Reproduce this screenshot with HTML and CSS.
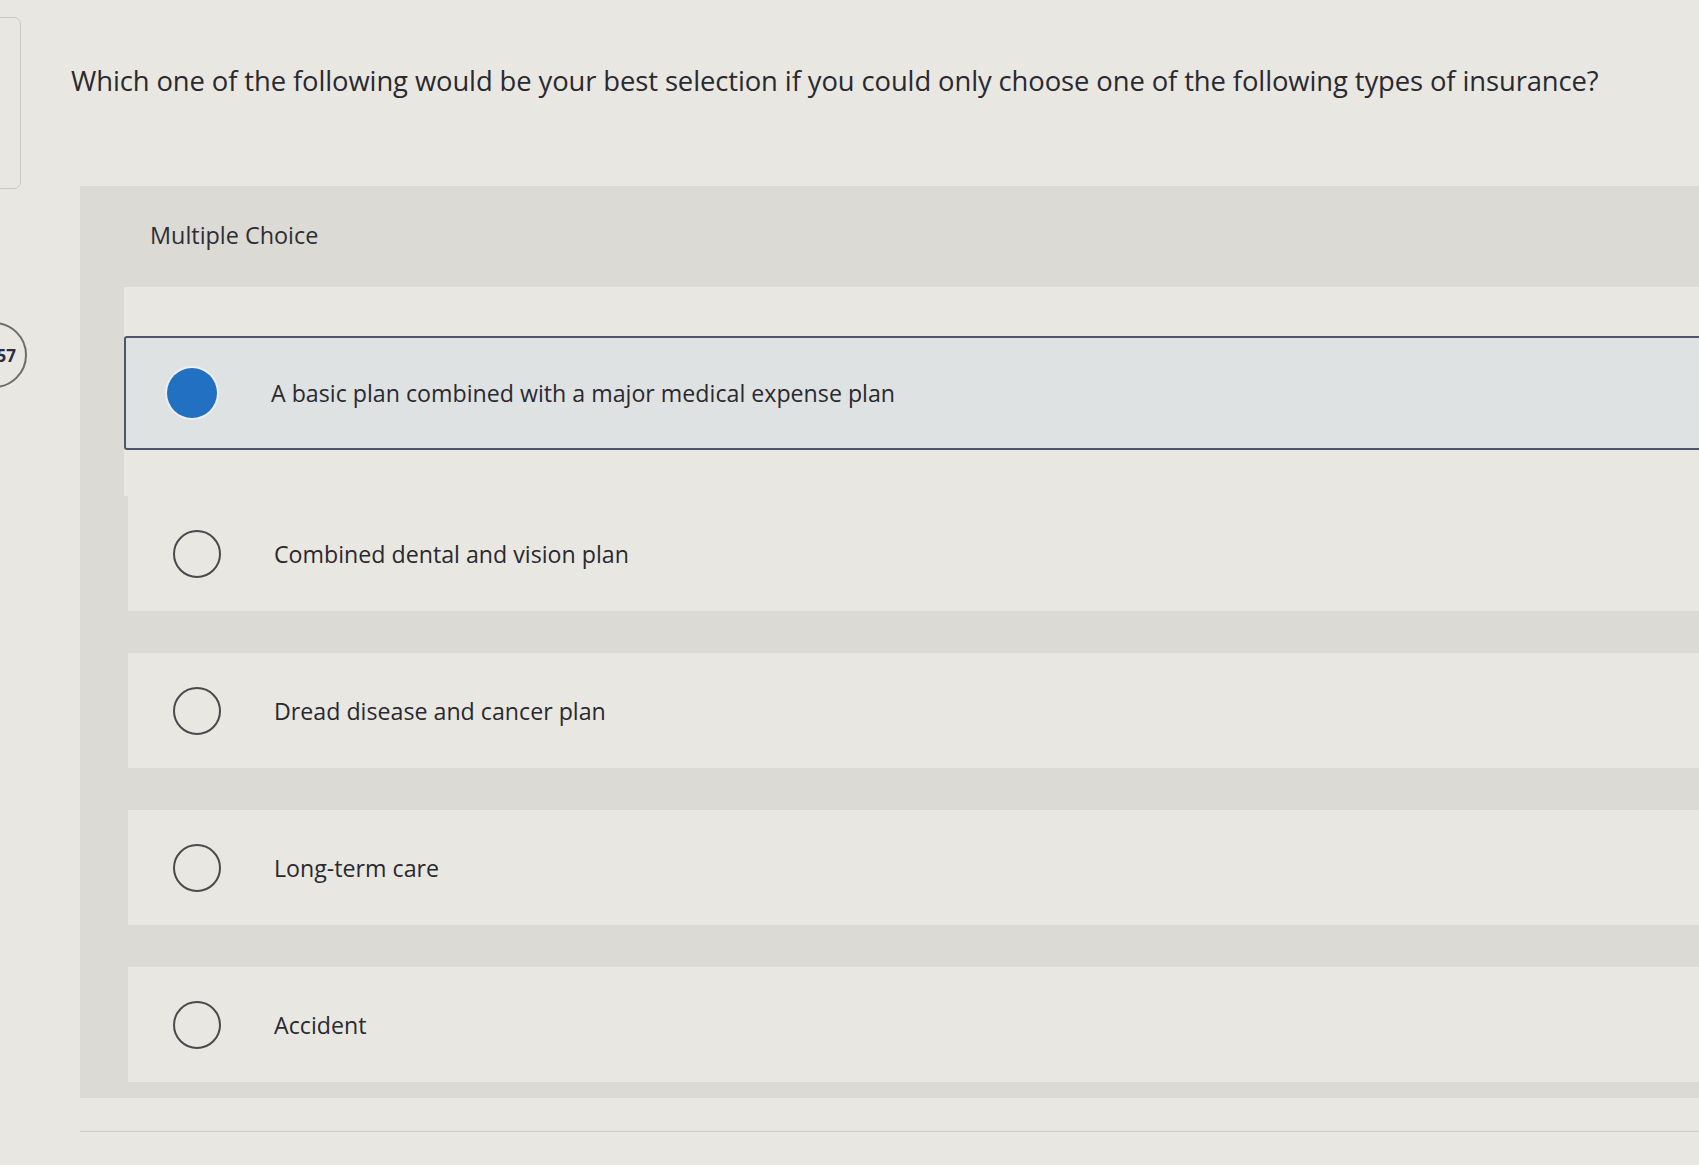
FILE: index.html
```html
<!DOCTYPE html>
<html lang="en">
<head>
<meta charset="utf-8">
<title>Multiple Choice Question</title>
<link rel="stylesheet" href="styles.css">
</head>
<body>
<div class="page">
  <aside class="rail">
    <div class="rail-box"></div>
    <div class="badge"><span>57</span></div>
  </aside>
  <main class="main">
    <p class="question">Which one of the following would be your best selection if you could only choose one of the following types of insurance?</p>
    <section class="panel">
      <div class="panel-head">Multiple Choice</div>
      <ul class="choices">
        <li class="choice-wrap first">
          <div class="choice selected">
            <span class="radio checked"></span>
            <span class="label">A basic plan combined with a major medical expense plan</span>
          </div>
        </li>
        <li class="choice-wrap second">
          <div class="choice">
            <span class="radio"></span>
            <span class="label">Combined dental and vision plan</span>
          </div>
        </li>
        <li class="choice-wrap">
          <div class="choice">
            <span class="radio"></span>
            <span class="label">Dread disease and cancer plan</span>
          </div>
        </li>
        <li class="choice-wrap">
          <div class="choice">
            <span class="radio"></span>
            <span class="label">Long-term care</span>
          </div>
        </li>
        <li class="choice-wrap">
          <div class="choice">
            <span class="radio"></span>
            <span class="label">Accident</span>
          </div>
        </li>
      </ul>
    </section>
    <div class="footer-line"></div>
  </main>
</div>
</body>
</html>
```

FILE: styles.css
```css
html, body {
  margin: 0;
  padding: 0;
}
body {
  background: #e9e7e2;
  font-family: "Open Sans", "Lato", "Liberation Sans", sans-serif;
  color: #2a292f;
  overflow: hidden;
  height: 1165px;
}
.page {
  display: flex;
  align-items: flex-start;
  width: 100%;
}
.rail {
  flex: none;
  width: 71px;
  display: flex;
  flex-direction: column;
}
.rail-box {
  margin-top: 17px;
  margin-left: -200px;
  width: 221px;
  height: 172px;
  border: 1px solid #cbc8c2;
  border-radius: 7px;
  box-sizing: border-box;
}
.badge {
  margin-top: 133px;
  margin-left: -41px;
  width: 68px;
  height: 66px;
  border: 2px solid #6e6c6c;
  border-radius: 34px;
  box-sizing: border-box;
  display: flex;
  align-items: center;
  justify-content: flex-end;
  padding-right: 9px;
  font-weight: 700;
  font-size: 17px;
  color: #2d2b47;
}
.main {
  flex: 1;
  min-width: 0;
}
.question {
  margin: 0;
  padding-top: 64px;
  font-size: 27.4px;
  line-height: 34px;
  white-space: nowrap;
  letter-spacing: -0.1px;
}
.panel {
  margin-top: 88px;
  margin-left: 9px;
  width: calc(100% + 60px);
  background: #dcdad5;
  padding: 0 0 16px 48px;
  box-sizing: border-box;
}
.panel-head {
  height: 101px;
  display: flex;
  align-items: center;
  padding-bottom: 4px;
  box-sizing: border-box;
  font-size: 23.4px;
  color: #2f2e34;
  margin-left: -48px;
  padding-left: 70px;
}
.choices {
  list-style: none;
  margin: 0;
  padding: 0;
  display: flex;
  flex-direction: column;
  gap: 42px;
}
.choice-wrap {
  background: #e9e7e2;
}
.choice-wrap.first {
  margin-left: -4px;
  padding: 49px 0 46px 0;
  margin-bottom: -42px;
}
.choice {
  height: 115px;
  display: flex;
  align-items: center;
  padding-left: 45px;
  box-sizing: border-box;
}
.choice.selected {
  height: 114px;
  background: #dfe2e2;
  border: 2px solid #4d566a;
  border-radius: 3px;
  padding-left: 41px;
}
.radio {
  flex: none;
  width: 48px;
  height: 48px;
  border: 2px solid #4a4a4c;
  border-radius: 50%;
  box-sizing: border-box;
}
.radio.checked {
  width: 50px;
  height: 50px;
  border: none;
  background: #2170c1;
  box-shadow: 0 0 0 2px #eef0f0;
}
.label {
  margin-left: 53px;
  font-size: 23.2px;
}
.selected .label {
  margin-left: 54px;
}
.footer-line {
  margin-top: 33px;
  margin-left: 9px;
  height: 1px;
  background: #cfccc6;
}
```
